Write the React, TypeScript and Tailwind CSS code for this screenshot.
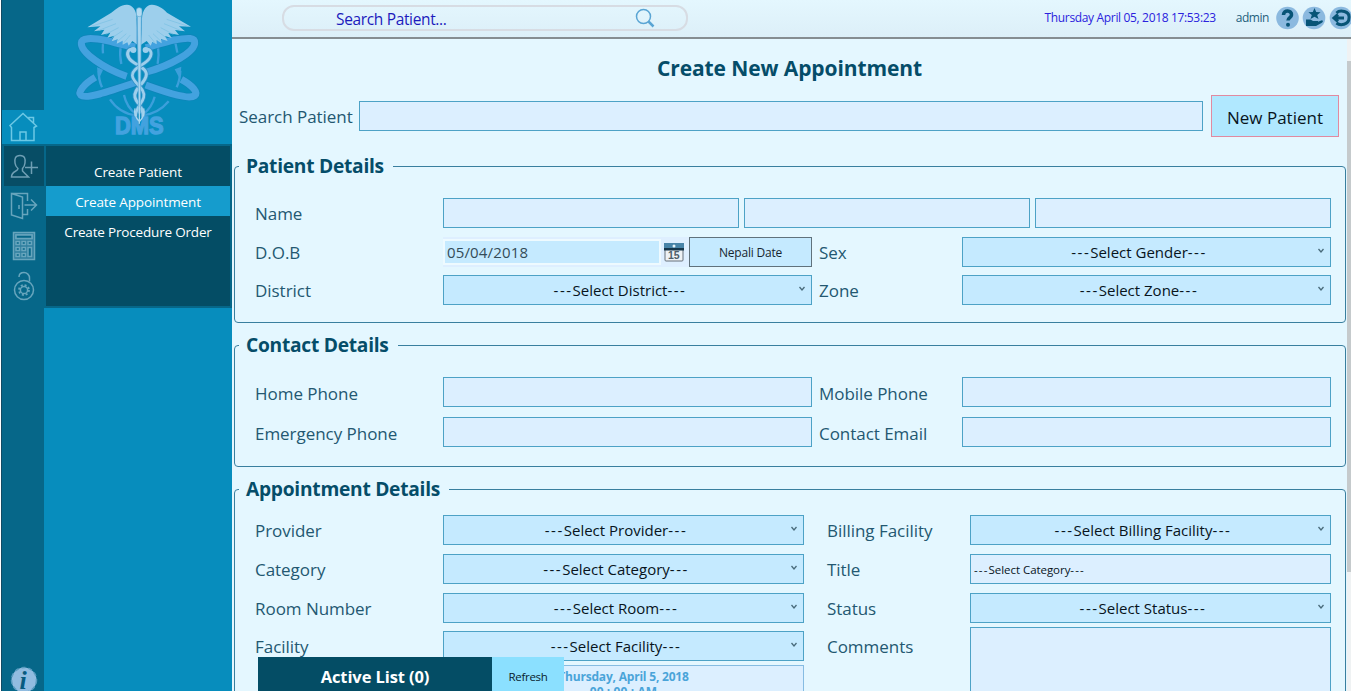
import React from 'react';

function Logo() {
  return (
    <svg viewBox="0 0 450 420" className="ml-[20px] h-[140px] w-[150px] shrink-0">
      <g fill="none" stroke="#3c9fdb" strokeWidth="7">
        <path d="M122 110Q114 132 117 160M170 140Q166 165 172 192M282 140Q286 165 281 192M328 110Q336 132 340 158" />
        <path d="M104 212Q104 240 114 262M349 212Q348 240 338 262" />
        <path d="M138 298Q166 340 216 346M314 304Q284 340 238 346M180 285Q188 322 216 342M272 290Q264 322 238 342" />
      </g>
      <path d="M99 202L103 240L118 208ZM352 200L348 238L332 208Z" fill="#3c9fdb" />
      <g fill="none" stroke="#1281b6" strokeWidth="25" opacity="0.6">
        <path d="M188 229C120 206 50 158 52 129C53 114 80 112 128 122C155 128 180 136 214 141" />
        <path d="M248 216C320 196 392 156 392 129C393 113 376 112 330 120C300 126 278 136 245 143" />
        <path d="M94 232C60 252 40 276 51 286C65 298 130 276 216 247" />
        <path d="M352 238C388 258 403 278 392 287C376 299 320 282 245 255" />
      </g>
      <g fill="none" stroke="#43a2df" strokeWidth="21">
        <path d="M188 229C120 206 50 158 52 129C53 114 80 112 128 122C155 128 180 136 214 141" />
        <path d="M248 216C320 196 392 156 392 129C393 113 376 112 330 120C300 126 278 136 245 143" />
        <path d="M94 232C60 252 40 276 51 286C65 298 130 276 216 247" />
        <path d="M352 238C388 258 403 278 392 287C376 299 320 282 245 255" />
      </g>
      <path d="M221 135L218 55C218 30 204 13 188 14C170 15 158 25 142 38L70 82L109 79L90 94L121 89L111 105L139 98L130 113L151 107L143 124L161 118L158 131L176 122L176 134L190 127L194 137L205 123Z" fill="#9dcfec" />
      <path d="M230 135L234 55C235 30 249 13 264 14C282 15 296 24 309 38L381 80L345 79L363 94L333 90L345 105L313 99L323 114L303 108L311 123L291 117L293 130L278 121L278 133L265 126L260 137L248 123Z" fill="#9dcfec" />
      <path d="M82 79L146 58M105 91L156 71M125 103L164 83M143 114L176 92M162 123L187 101M178 130L199 105M370 78L308 58M349 91L300 71M328 103L290 83M308 114L278 92M290 123L267 101M274 130L254 105" stroke="#79bfe2" strokeWidth="2" fill="none" />
      <path d="M218 55V135L224 165L231 135L234 55Z" fill="#2089c4" />
      <g fill="none" strokeLinecap="round">
        <path d="M211 149C192 143 186 160 195 174C206 194 248 200 247 224C246 250 207 265 213 292C218 314 239 316 237 350" stroke="#2f91c7" strokeWidth="14" />
        <path d="M211 149C192 143 186 160 195 174C206 194 248 200 247 224C246 250 207 265 213 292C218 314 239 316 237 350" stroke="#9dcfec" strokeWidth="9" />
        <path d="M242 149C261 143 266 160 257 174C246 194 204 203 205 226C206 250 246 264 239 292C234 314 214 322 215 350" stroke="#2f91c7" strokeWidth="13" />
        <path d="M242 149C261 143 266 160 257 174C246 194 204 203 205 226C206 250 246 264 239 292C234 314 214 322 215 350" stroke="#9dcfec" strokeWidth="8" />
      </g>
      <circle cx="208" cy="150" r="9" fill="#9dcfec" />
      <circle cx="245" cy="150" r="9" fill="#9dcfec" />
      <path d="M220 48H232L229 340H224Z" fill="#a9d5ee" stroke="#5eaedb" strokeWidth="2" />
      <rect x="217" y="23" width="17" height="27" rx="8" fill="#b4dbf1" stroke="#63aed7" strokeWidth="2" />
      <text x="153" y="402" textLength="146" lengthAdjust="spacingAndGlyphs" fontFamily="Liberation Sans" fontWeight="bold" fontSize="72" fill="#43a2df" stroke="#43a2df" strokeWidth="4">DMS</text>
      <path d="M213 325Q208 345 226 365Q245 345 239 325M226 320V371" fill="none" stroke="#a9d5ee" strokeWidth="4" />
    </svg>
  );
}

const railSvg = 'block h-full w-full';

function HomeIcon() {
  return (
    <svg viewBox="0 0 42 34" className={railSvg} fill="none" stroke="#6cc8e5" strokeWidth="1.5">
      <path d="M8 15.5L21 3.5L34.5 16L32 17.5V30.5H9.5V17.5ZM27 8.5V7.5H31.5V13M18 30V22H24V30" />
    </svg>
  );
}
function PersonIcon() {
  return (
    <svg viewBox="0 0 40 40" className={railSvg} fill="none" stroke="#6f9fb4" strokeWidth="1.5">
      <path d="M16 9.5C11 9.5 10.5 13 11 17C11.3 20 12 21 14 22.5C14 26 7.5 24.5 7.5 31H24.5L21 27.5M16 9.5C21 9.5 21.5 13 21 17C20.7 20 20 21 18.5 22.5V25L21 27.5M21 21.5H34M27.5 15.5V28" />
    </svg>
  );
}
function DoorIcon() {
  return (
    <svg viewBox="0 0 42 40" className={railSvg} fill="none" stroke="#67a5bd" strokeWidth="1.5">
      <path d="M9.5 7.5L20.5 11V32.5L9.5 29ZM10 7.5H25.5V15M25.5 23V28.5H21M17 19V23M22.5 19H34M29 13.5L34.5 19L29 24.5" />
    </svg>
  );
}
function CalculatorIcon() {
  return (
    <svg viewBox="0 0 42 42" className={railSvg} fill="none" stroke="#67a5bd" strokeWidth="1.5">
      <path fill="#2f7f9f" d="M11.5 6.5H32.5V33.5H11.5ZM14 9H30V12.5H14Z" />
      <path fill="#066789" d="M14 9H30V12.5H14ZM14 15.5H17.5V18.5H14ZM20 15.5H23.5V18.5H20ZM26 15.5H29.5V18.5H26ZM14 21.5H17.5V24.5H14ZM20 21.5H23.5V24.5H20ZM26 21.5H29.5V30.5H26ZM14 27.5H17.5V30.5H14ZM20 27.5H23.5V30.5H20Z" />
    </svg>
  );
}
function LockIcon() {
  return (
    <svg viewBox="0 0 42 40" className={railSvg} fill="none" stroke="#67a5bd" strokeWidth="1.5">
      <circle cx="22" cy="22" r="9.5" />
      <circle cx="22" cy="22" r="3.6" />
      <circle cx="22" cy="22" r="5" strokeWidth="1.8" strokeDasharray="2 1.93" />
      <path d="M17 9C17 5.5 19 4.5 22 4.5C25 4.5 27.5 7 27.5 10V13.5" />
    </svg>
  );
}
function InfoIcon() {
  return (
    <svg viewBox="0 0 42 31" className={railSvg}>
      <circle cx="22" cy="20" r="12.5" fill="#91bce0" />
      <circle cx="22" cy="20" r="12.5" fill="none" stroke="#579bbf" strokeDasharray="4 3" strokeWidth="1.5" />
      <text x="17.5" y="29" fontFamily="Liberation Serif" fontStyle="italic" fontWeight="bold" fontSize="26" fill="#075b80">i</text>
    </svg>
  );
}

function Sidebar() {
  return (
    <aside className="flex h-full w-[232px] shrink-0">
      <div className="w-px shrink-0 bg-white" />
      <div className="w-px shrink-0 bg-[#134b64]" />
      <div className="flex w-[230px] flex-col bg-[#078dbd]">
        <div className="flex h-[144px]">
          <div className="w-[42px] shrink-0">
            <div className="h-[110px] bg-[#066789]" />
            <div className="h-[34px]"><HomeIcon /></div>
          </div>
          <div className="w-[188px]"><Logo /></div>
        </div>
        <div className="flex flex-1">
          <div className="flex w-[42px] shrink-0 flex-col bg-[#066789] pt-[2px]">
            <div className="ml-[2px] h-[40px] bg-[#074d65]"><PersonIcon /></div>
            <div className="h-[40px]"><DoorIcon /></div>
            <div className="h-[42px]"><CalculatorIcon /></div>
            <div className="h-[40px]"><LockIcon /></div>
            <div className="mt-auto h-[31px]"><InfoIcon /></div>
          </div>
          <nav className="h-[164px] w-[188px] border-2 border-[#066789] bg-[#044d65] pt-[10px] text-center text-[13.5px] text-white">
            <div className="h-[30px] pt-px leading-[30px] tracking-[-0.12px]">Create Patient</div>
            <div className="h-[30px] bg-[#159ccd] pt-px leading-[30px] tracking-[-0.12px]">Create Appointment</div>
            <div className="h-[30px] pt-px leading-[30px] tracking-[-0.18px]">Create Procedure Order</div>
          </nav>
        </div>
      </div>
    </aside>
  );
}

function Header() {
  return (
    <header className="flex h-[39px] shrink-0 border-b-2 border-[#858d91] bg-[linear-gradient(#e4f7fe,#dceff8)]">
      <div className="ml-[50px] mt-[5px] flex h-[26px] w-[406px] shrink-0 items-center rounded-[12px] border-2 border-[#d7dce3] pl-[52px]">
        <span className="pt-[3px] text-[15.5px] tracking-[-0.35px] text-[#1c1bbd]">Search Patient...</span>
        <svg viewBox="0 0 20 20" className="ml-auto mr-[31px] size-[20px]" fill="none" stroke="#5aa5d4">
          <circle cx="8.5" cy="8.5" r="7" strokeWidth="1.5" />
          <path d="M13.5 13.5L18.5 18.5" strokeWidth="2.5" />
        </svg>
      </div>
      <div className="ml-auto flex h-[36px] items-center">
        <span className="mr-[20px] whitespace-nowrap text-[12px] tracking-[-0.34px] text-[#2b22dd]">Thursday April 05, 2018 17:53:23</span>
        <span className="mr-[7px] text-[12px] tracking-[-0.45px] text-[#23607c]">admin</span>
        <svg viewBox="0 0 75 24" className="h-[24px] w-[75px]">
          <circle cx="11.5" cy="12" r="11.3" fill="#8bb9df" />
          <circle cx="38" cy="12" r="11.3" fill="#8bb9df" />
          <circle cx="65" cy="12" r="11.3" fill="#8bb9df" />
          <path d="M7.5 9C7.5 3.5 16 4 15.5 9C15.4 11.7 12 11.5 12 14.5" fill="none" stroke="#075476" strokeWidth="3.6" />
          <circle cx="12" cy="18.7" r="2" fill="#075476" />
          <path d="M38.5 2L40.2 6L44.6 6.2L41.2 9L42.5 13L38.5 10.8L34.5 13L35.8 9L32.4 6.2L36.8 6Z" fill="#075476" />
          <path d="M30 13.5H34.5L37 15H42V17H38.5L46 14.3C47.5 14.8 47 16.3 45.5 17L40 20H30Z" fill="#075476" />
          <path d="M60.5 7C64 3.5 74 5 73 12C73 19 64 20 60.5 17M58.5 12H68M62 8.5L58 12L62 15.5" fill="none" stroke="#075476" strokeWidth="3" />
        </svg>
      </div>
    </header>
  );
}

function Label({ children, className = 'pt-[3px]' }: { children: React.ReactNode; className?: string }) {
  return <span className={`shrink-0 whitespace-nowrap text-[17px] tracking-[-0.04px] text-[#235871] ${className}`}>{children}</span>;
}

function Field({ className = '' }: { className?: string }) {
  return <div className={`h-[30px] shrink-0 border border-[#4da2c6] bg-[#dcefff] ${className}`} />;
}

function Dashed({ children }: { children: React.ReactNode }) {
  return (
    <>
      <span className="tracking-[0.1em]">---</span>
      {children}
      <span className="tracking-[0.1em]">---</span>
    </>
  );
}

function Select({ children, className = '' }: { children: React.ReactNode; className?: string }) {
  return (
    <div className={`flex h-[30px] shrink-0 items-center border border-[#4da2c6] bg-[#c5eaff] text-[15px] text-[#08141c] ${className}`}>
      <span className="flex-1 whitespace-nowrap pr-[2px] text-center"><Dashed>{children}</Dashed></span>
      <svg viewBox="0 0 8 6" className="mb-[2px] mr-[5px] h-[6px] w-[8px]" fill="none" stroke="#496b7b" strokeWidth="1.3">
        <path d="M1.5 1L4 4L6.5 1" />
      </svg>
    </div>
  );
}

function Section({ title, className = '', children }: { title: string; className?: string; children: React.ReactNode }) {
  return (
    <fieldset className={`ml-[2px] w-[1112px] shrink-0 rounded-[4px] border border-[#397f9f] pl-[4px] ${className}`}>
      <legend className="h-[24px] whitespace-nowrap pl-[7px] pr-[9px] text-[19.2px] font-bold leading-[24px] tracking-[-0.26px] text-[#054d69]">{title}</legend>
      <div className="flex flex-col pl-[16px]">{children}</div>
    </fieldset>
  );
}

function CalendarIcon() {
  return (
    <svg viewBox="0 0 20 20" className="ml-[3px] mt-[2px] h-[20px] w-[20px]">
      <rect x="1" y="1" width="18" height="17" rx="1" fill="#eef2f5" stroke="#66717a" />
      <path d="M0 0H20V5H0Z" fill="#4884a8" />
      <path d="M0 5H20V7.5H0Z" fill="#16364b" />
      <circle cx="10" cy="3" r="1.5" fill="#e7f4fa" />
      <text x="4" y="16.2" fontFamily="Liberation Sans" fontWeight="bold" fontSize="10.5" fill="#505f69">15</text>
    </svg>
  );
}

export default function App() {
  return (
    <div className="relative flex h-[691px] w-[1351px] overflow-hidden bg-[#e4f7ff] font-['Open_Sans',sans-serif]">
      <Sidebar />
      <div className="flex min-w-0 flex-1 flex-col">
        <Header />
        <div className="flex min-h-0 flex-1">
          <main className="flex w-[1115px] shrink-0 flex-col overflow-hidden">
            <h1 className="h-[56px] shrink-0 pt-[14px] text-center text-[21px] font-bold leading-[30px] tracking-[-0.1px] text-[#054d69]">Create New Appointment</h1>
            <div className="flex h-[43px] shrink-0 pl-[7px]">
              <Label className="w-[120px] pt-[9px]">Search Patient</Label>
              <Field className="mt-[6px] w-[844px]" />
              <button className="ml-[8px] h-[42px] w-[128px] border border-[#e18aa0] bg-[#b0e8ff] pt-[3px] text-[17px] text-[#08141c]">New Patient</button>
            </div>

            <Section title="Patient Details" className="mt-[16px] h-[169px]">
              <div className="mt-[20px] flex h-[39px]">
                <Label className="w-[188px] pt-[3px]">Name</Label>
                <Field className="w-[296px]" />
                <Field className="ml-[5px] w-[286px]" />
                <Field className="ml-[5px] w-[296px]" />
              </div>
              <div className="flex h-[38px]">
                <Label className="w-[188px] pt-[3px]">D.O.B</Label>
                <div className="flex h-[30px] w-[246px] items-center bg-[#deefff]">
                  <div className="h-[26px] w-[218px] border-2 border-[#eefaff] bg-[#c5eaff] pl-[2px] text-[15px] leading-[22px] tracking-[0.15px] text-[#344c58]">05/04/2018</div>
                  <CalendarIcon />
                </div>
                <button className="h-[30px] w-[123px] border border-[#60727c] bg-[#c5eaff] pt-px text-[12px] tracking-[-0.2px] text-[#17262f]">Nepali Date</button>
                <Label className="ml-[7px] w-[143px] pt-[3px]">Sex</Label>
                <Select className="w-[369px]">Select Gender</Select>
              </div>
              <div className="flex">
                <Label className="w-[188px] pt-[3px]">District</Label>
                <Select className="w-[369px]">Select District</Select>
                <Label className="ml-[7px] w-[143px] pt-[3px]">Zone</Label>
                <Select className="w-[369px]">Select Zone</Select>
              </div>
            </Section>

            <Section title="Contact Details" className="mt-[10px] h-[134px]">
              <div className="mt-[20px] flex h-[40px]">
                <Label className="w-[188px] pt-[4px]">Home Phone</Label>
                <Field className="w-[369px]" />
                <Label className="ml-[7px] w-[143px] pt-[4px]">Mobile Phone</Label>
                <Field className="w-[369px]" />
              </div>
              <div className="flex">
                <Label className="w-[188px] pt-[4px]">Emergency Phone</Label>
                <Field className="w-[369px]" />
                <Label className="ml-[7px] w-[143px] pt-[4px]">Contact Email</Label>
                <Field className="w-[369px]" />
              </div>
            </Section>

            <Section title="Appointment Details" className="mt-[10px] h-[260px]">
              <div className="mt-[14px] flex">
                <div className="w-[549px] shrink-0">
                  <div className="flex h-[39px]"><Label className="w-[188px] pt-[3px]">Provider</Label><Select className="w-[361px]">Select Provider</Select></div>
                  <div className="flex h-[39px]"><Label className="w-[188px] pt-[3px]">Category</Label><Select className="w-[361px]">Select Category</Select></div>
                  <div className="flex h-[38px]"><Label className="w-[188px] pt-[3px]">Room Number</Label><Select className="w-[361px]">Select Room</Select></div>
                  <div className="flex h-[34px]"><Label className="w-[188px] pt-[3px]">Facility</Label><Select className="w-[361px]">Select Facility</Select></div>
                  <div className="ml-[188px] h-[60px] w-[361px] border border-[#86bce2] bg-[#dcefff] pt-[3px] text-center text-[12px] font-bold leading-[15px] tracking-[-0.2px] text-[#4aa4d9]">
                    <div>Thursday, April 5, 2018</div>
                    <div className="tracking-[0.1px]">00 : 00 : AM</div>
                  </div>
                </div>
                <div className="ml-[23px] w-[504px] shrink-0">
                  <div className="flex h-[39px]"><Label className="w-[143px] pt-[3px]">Billing Facility</Label><Select className="w-[361px]">Select Billing Facility</Select></div>
                  <div className="flex h-[39px]"><Label className="w-[143px] pt-[3px]">Title</Label><div className="h-[30px] w-[361px] border border-[#4da2c6] bg-[#dcefff] pl-[3px] text-[11.5px] leading-[29px] tracking-[-0.05px] text-[#08141c]"><Dashed>Select Category</Dashed></div></div>
                  <div className="flex h-[34px]"><Label className="w-[143px] pt-[3px]">Status</Label><Select className="w-[361px]">Select Status</Select></div>
                  <div className="flex"><Label className="w-[143px] pt-[7px]">Comments</Label><div className="h-[100px] w-[361px] border border-[#4da2c6] bg-[#dcefff]" /></div>
                </div>
              </div>
            </Section>
          </main>
          <div className="w-[4px] shrink-0 bg-[#eff2f3] pt-[22px]"><div className="h-[511px] bg-[#c5cacc]" /></div>
        </div>
      </div>
      <div className="absolute bottom-0 left-[258px] flex h-[34px] w-[306px]">
        <div className="w-[234px] bg-[#044d65] pt-[2px] text-center text-[16.5px] font-bold leading-[36px] tracking-[-0.1px] text-white">Active List (0)</div>
        <button className="w-[72px] bg-[#8be0ff] pt-[5px] text-[11.5px] tracking-[-0.28px] text-[#08222e]">Refresh</button>
      </div>
    </div>
  );
}
